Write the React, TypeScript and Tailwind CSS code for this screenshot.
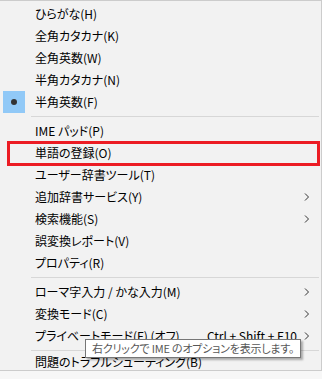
import React from "react";

type Item = {
  label: string;
  checked?: boolean;
  sub?: boolean;
  shortcut?: string;
};

const groups: Item[][] = [
  [
    { label: "ひらがな(H)" },
    { label: "全角カタカナ(K)" },
    { label: "全角英数(W)" },
    { label: "半角カタカナ(N)" },
    { label: "半角英数(F)", checked: true },
  ],
  [
    { label: "IME パッド(P)" },
    { label: "単語の登録(O)" },
    { label: "ユーザー辞書ツール(T)" },
    { label: "追加辞書サービス(Y)", sub: true },
    { label: "検索機能(S)", sub: true },
    { label: "誤変換レポート(V)" },
    { label: "プロパティ(R)" },
  ],
  [
    { label: "ローマ字入力 / かな入力(M)", sub: true },
    { label: "変換モード(C)", sub: true },
    { label: "プライベートモード(F) (オフ)", sub: true, shortcut: "Ctrl + Shift + F10" },
  ],
  [{ label: "問題のトラブルシューティング(B)" }],
];

function Chevron() {
  return (
    <svg width="6" height="8" viewBox="0 0 6 8" className="shrink-0">
      <polyline points="1,0.5 4.5,4 1,7.5" fill="none" stroke="#333" strokeWidth="1" />
    </svg>
  );
}

function Row({ item, last }: { item: Item; last?: boolean }) {
  return (
    <div className={`flex items-center ${last ? "h-[16px]" : "h-[22px]"}`}>
      <div className="w-[35px] h-full flex items-center pl-[3px]">
        {item.checked && (
          <div className="w-[22px] h-[22px] bg-[#91c9f7] flex items-center justify-center">
            <div className="w-[6px] h-[6px] rounded-full bg-[#333]" />
          </div>
        )}
      </div>
      <span className="flex-1 whitespace-nowrap">{item.label}</span>
      {item.shortcut && <span className="mr-[7px] whitespace-nowrap">{item.shortcut}</span>}
      <div className="w-[17px] flex items-center">{item.sub && <Chevron />}</div>
    </div>
  );
}

export default function App() {
  return (
    <div
      className="relative w-[322px] h-[379px] bg-[#f7f7f7] text-[12px] text-black [font-feature-settings:'palt']"
      style={{ fontFamily: '"Noto Sans CJK JP", "Noto Sans", sans-serif' }}
    >
      <div className="w-[322px] bg-[#f2f2f2] border-t border-r border-b border-[#cccccc] pt-[2px]">
        {groups.map((g, gi) => (
          <div key={gi}>
            {gi > 0 && (
              <div className="h-[7px] flex items-center pl-[31px] pr-[2px]">
                <div className="h-px w-full bg-[#d7d7d7]" />
              </div>
            )}
            {g.map((it, i) => (
              <Row key={i} item={it} last={gi === groups.length - 1} />
            ))}
          </div>
        ))}
      </div>

      {/* red highlight around 単語の登録 */}
      <div className="absolute left-[7px] top-[141px] w-[313px] h-[25px] border-[3px] border-[#ec1c24]" />

      {/* tooltip */}
      <div className="absolute left-[85px] top-[339px] w-[216px] h-[19px] bg-white border border-[#767676] shadow-[2px_2px_2px_rgba(0,0,0,0.3)] flex items-center pl-[6px] text-[11px] tracking-[-0.2px] text-[#575757] whitespace-nowrap">
        右クリックで IME のオプションを表示します。
      </div>
    </div>
  );
}
